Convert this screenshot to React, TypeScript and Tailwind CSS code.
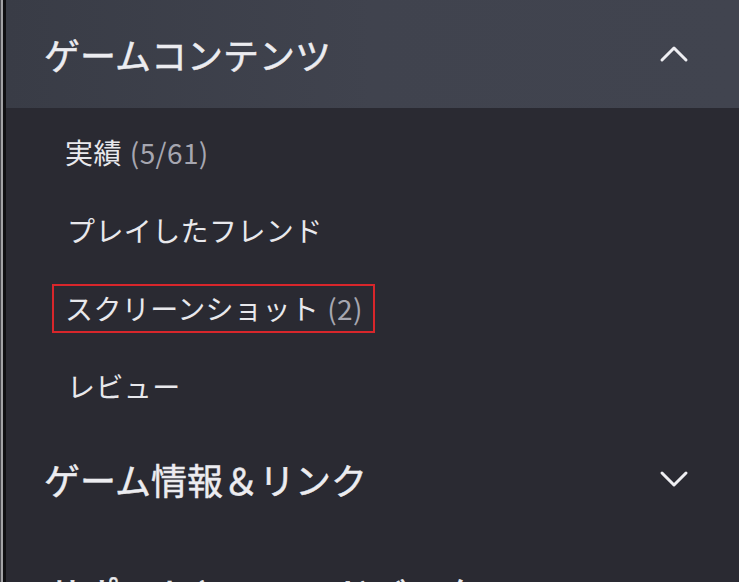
import React from "react";

const Chevron = ({ up }: { up?: boolean }) => (
  <svg width="30" height="18" viewBox="0 0 30 18" fill="none">
    <polyline
      points={up ? "3,15 15,3 27,15" : "3,3 15,15 27,3"}
      stroke="#eeeef2"
      strokeWidth="3"
      strokeLinecap="round"
      strokeLinejoin="round"
    />
  </svg>
);

export default function App() {
  const font = { fontFamily: '"Noto Sans CJK JP", "Noto Sans", sans-serif' };
  return (
    <div className="w-[739px] h-[582px] overflow-hidden flex bg-[#2a2a32]" style={font}>
      <div className="w-px bg-[#4b4b50]" />
      <div className="w-[2px] bg-[#a3a3a6]" />
      <div className="w-[3px] bg-[#0f0f12]" />
      <div className="flex-1 flex flex-col">
        <div className="h-[108px] shrink-0 flex items-center justify-between pl-[38px] pr-[50px] bg-gradient-to-r from-[#393c46] via-[#40434e] to-[#41444f]">
          <span className="text-[36px] leading-none font-normal text-[#ececf0] [-webkit-text-stroke:0.5px_#ececf0]">ゲームコンテンツ</span>
          <Chevron up />
        </div>
        <div className="flex flex-col pt-[5px] pl-[46px] text-[28px] leading-none text-[#e8e8ec] tracking-[0.4px]">
          <div className="h-[78px] flex items-center pl-[13px]">
            実績<span className="text-[#a6a6b0] ml-[8px]">(5/61)</span>
          </div>
          <div className="h-[78px] flex items-center pl-[15px]">プレイしたフレンド</div>
          <div className="h-[78px] flex items-center">
            <div className="h-[49px] flex items-center border-2 border-[#d8262b] pl-[11px] pr-[10px]">
              スクリーンショット<span className="text-[#a6a6b0] ml-[8px]">(2)</span>
            </div>
          </div>
          <div className="h-[78px] flex items-center pl-[15px]">レビュー</div>
        </div>
        <div className="h-[108px] shrink-0 flex items-center justify-between pl-[38px] pr-[50px]">
          <span className="text-[36px] leading-none font-normal text-[#ececf0] [-webkit-text-stroke:0.5px_#ececf0]">ゲーム情報＆リンク</span>
          <Chevron />
        </div>
        <div className="mt-[6px] h-[108px] shrink-0 flex items-center justify-between pl-[42px] pr-[50px]">
          <span className="text-[36px] leading-none font-normal text-[#ececf0] [-webkit-text-stroke:0.5px_#ececf0]">サポートとフィードバック</span>
          <Chevron />
        </div>
      </div>
    </div>
  );
}
